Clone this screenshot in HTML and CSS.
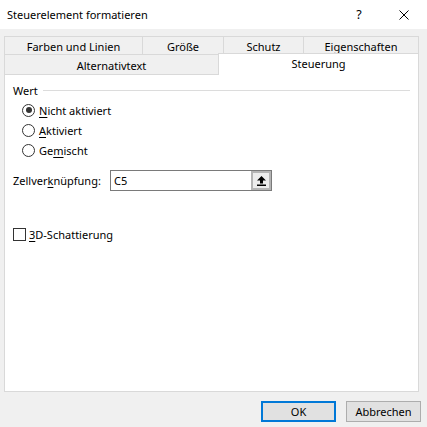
FILE: index.html
```html
<!DOCTYPE html>
<html lang="de">
<head>
<meta charset="utf-8">
<title>Steuerelement formatieren</title>
<link rel="stylesheet" href="styles.css">
</head>
<body>
<div class="titlebar">
  <span class="title">Steuerelement formatieren</span>
  <span class="help">?</span>
  <span class="close">
    <svg width="10" height="10" viewBox="0 0 10 10"><path d="M0.5 0.5 L9.5 9.5 M9.5 0.5 L0.5 9.5" stroke="#000" stroke-width="1" fill="none"/></svg>
  </span>
</div>

<div class="tabs">
  <div class="tabrow row1">
    <div class="tab w-farben">Farben und Linien</div>
    <div class="tab w-groesse">Größe</div>
    <div class="tab w-schutz">Schutz</div>
    <div class="tab w-eigen last">Eigenschaften</div>
  </div>
  <div class="tabrow row2">
    <div class="tab w-alt">Alternativtext</div>
    <div class="tab w-steuer active">Steuerung</div>
  </div>
</div>

<div class="panel">
  <div class="group-head">
    <span>Wert</span>
    <span class="rule"></span>
  </div>
  <div class="radios">
    <div class="option"><span class="radio checked"></span><span><u>N</u>icht aktiviert</span></div>
    <div class="option"><span class="radio"></span><span><u>A</u>ktiviert</span></div>
    <div class="option"><span class="radio"></span><span>Ge<u>m</u>ischt</span></div>
  </div>
  <div class="link-row">
    <span class="link-label">Zellver<u>k</u>nüpfung:</span>
    <div class="ref-box">
      <span class="ref-value">C5</span>
      <span class="ref-btn">
        <svg width="9" height="10" viewBox="0 0 9 10"><path d="M4.5 0 L9 4.5 L6 4.5 L6 7.5 L3 7.5 L3 4.5 L0 4.5 Z" fill="#000"/><rect x="0" y="8.5" width="9" height="1.5" fill="#000"/></svg>
      </span>
    </div>
  </div>
  <div class="check-row">
    <span class="checkbox"></span>
    <span><u>3</u>D-Schattierung</span>
  </div>
</div>

<div class="buttons">
  <button class="btn default">OK</button>
  <button class="btn">Abbrechen</button>
</div>
</body>
</html>
```

FILE: styles.css
```css
* {
  box-sizing: border-box;
}

html,
body {
  margin: 0;
  padding: 0;
}

body {
  width: 427px;
  height: 427px;
  overflow: hidden;
  background: #f0f0f0;
  font-family: "Noto Sans", "Open Sans", sans-serif;
  font-size: 11px;
  color: #000;
}

u {
  text-decoration-thickness: 1px;
  text-underline-offset: 2px;
}

/* window caption */
.titlebar {
  height: 29px;
  background: #fff;
  display: flex;
  align-items: center;
  padding-left: 7px;
  font-size: 11px;
}

.title {
  flex: 1;
}

.help {
  width: 44px;
  text-align: center;
  font-size: 12.5px;
}

.close {
  width: 46px;
  display: flex;
  justify-content: center;
  align-items: center;
}

/* tab strip: two stacked rows */
.tabs {
  margin-top: 7px;
  padding-left: 4px;
}

.tabrow {
  display: flex;
  align-items: flex-start;
}

.row1 {
  height: 18px;
}

.row2 {
  height: 20px;
}

.tab {
  border-top: 1px solid #d9d9d9;
  border-left: 1px solid #d9d9d9;
  text-align: center;
  background: #f0f0f0;
}

.row1 .tab {
  height: 18px;
  line-height: 20px;
}

.row2 .tab {
  height: 20px;
  line-height: 22px;
}

.tab.last {
  border-right: 1px solid #d9d9d9;
}

.w-farben { width: 138px; }
.w-groesse { width: 81px; }
.w-schutz { width: 80px; }
.w-eigen { width: 116px; }
.w-alt { width: 214px; }
.w-steuer { width: 201px; }

.row2 .tab.active {
  position: relative;
  z-index: 1;
  margin-top: -1px;
  height: 22px;
  line-height: 20px;
  background: #fff;
  border-right: 1px solid #d9d9d9;
}

/* page body */
.panel {
  width: 415px;
  height: 318px;
  margin-left: 4px;
  background: #fff;
  border: 1px solid #d9d9d9;
  padding: 7px 8px 0 8px;
}

.group-head {
  display: flex;
  align-items: center;
  height: 16px;
}

.group-head .rule {
  flex: 1;
  height: 1px;
  margin-left: 5px;
  background: #dcdcdc;
}

.radios {
  margin-top: 2px;
  margin-left: 9px;
}

.option {
  display: flex;
  align-items: center;
  height: 20px;
}

.radio {
  width: 13px;
  height: 13px;
  border: 1px solid #333;
  border-radius: 50%;
  background: #fff;
  margin-right: 4px;
  display: flex;
  align-items: center;
  justify-content: center;
}

.radio.checked::after {
  content: "";
  width: 6px;
  height: 6px;
  border-radius: 50%;
  background: #333;
}

.link-row {
  display: flex;
  align-items: center;
  margin-top: 10px;
  height: 21px;
}

.link-label {
  width: 97px;
}

.ref-box {
  width: 162px;
  height: 21px;
  border: 1px solid #7a7a7a;
  display: flex;
  align-items: center;
  background: #fff;
}

.ref-value {
  flex: 1;
  padding-left: 3px;
}

.ref-btn {
  width: 20px;
  height: 19px;
  border: 2px solid #b4b4b4;
  background: #ececec;
  display: flex;
  align-items: center;
  justify-content: center;
}

.check-row {
  display: flex;
  align-items: center;
  height: 20px;
  margin-top: 33px;
}

.checkbox {
  width: 13px;
  height: 13px;
  border: 1px solid #333;
  background: #fff;
  margin-right: 3px;
}

/* dialog buttons */
.buttons {
  display: flex;
  justify-content: flex-end;
  gap: 10px;
  margin-top: 9px;
  padding-right: 6px;
}

.btn {
  width: 75px;
  height: 21px;
  padding: 0;
  font-family: inherit;
  font-size: 11px;
  color: #000;
  background: #e1e1e1;
  border: 1px solid #adadad;
}

.btn.default {
  border: 2px solid #0078d7;
}
```
